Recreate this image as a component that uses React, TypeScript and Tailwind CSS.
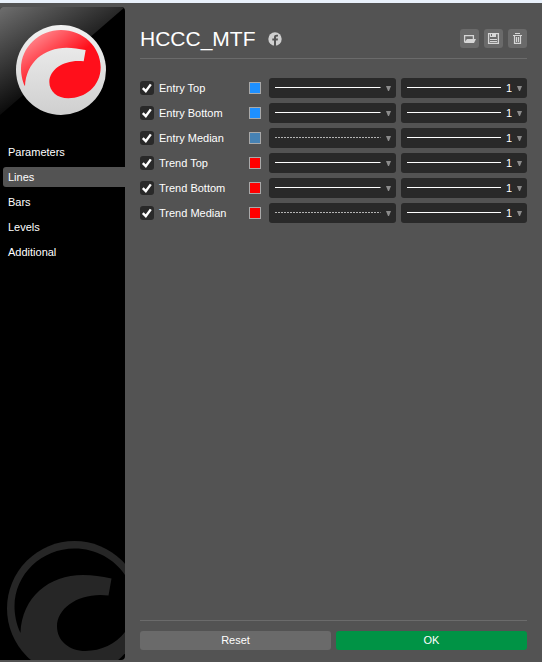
import { useState } from "react";
import clsx from "clsx";

const TABS = ["Parameters", "Lines", "Bars", "Levels", "Additional"];

type LineStyle = "solid" | "dots";

interface Line {
  name: string;
  color: string;
  style: LineStyle;
}

const INITIAL_LINES: Line[] = [
  { name: "Entry Top", color: "#1e90ff", style: "solid" },
  { name: "Entry Bottom", color: "#1e90ff", style: "solid" },
  { name: "Entry Median", color: "#4682b4", style: "dots" },
  { name: "Trend Top", color: "#ff0000", style: "solid" },
  { name: "Trend Bottom", color: "#ff0000", style: "solid" },
  { name: "Trend Median", color: "#ff0000", style: "dots" },
];

// The part of the disc that is not covered by the swoosh
const SWOOSH =
  "M27 184C18 166 15 145 15 131C15 66 70 15 135 15C201 15 254 66 254 127C254 184 207 220 157 220C124 220 100 199 100 171C100 132 147 102 203 109L209 75C188 71 172 68 152 68C84 68 30 112 27 184Z";

const Logo = () => (
  <svg viewBox="0 0 270 270" className="size-[90px]" aria-hidden="true">
    <defs>
      <linearGradient id="disc" x1="0" y1="0" x2="0" y2="1">
        <stop offset="0" stopColor="#f2f2f2" />
        <stop offset="1" stopColor="#cfcfcf" />
      </linearGradient>
      <linearGradient
        id="red"
        gradientUnits="userSpaceOnUse"
        x1="60"
        y1="30"
        x2="130"
        y2="128"
      >
        <stop offset="0" stopColor="#ff858b" />
        <stop offset="1" stopColor="#ff0f1b" />
      </linearGradient>
    </defs>
    <circle cx="135" cy="135" r="135" fill="url(#disc)" />
    <path d={SWOOSH} fill="url(#red)" />
  </svg>
);

const Watermark = () => (
  <svg
    viewBox="0 0 270 270"
    className="ml-[7px] size-[135px] max-w-none"
    aria-hidden="true"
  >
    <circle cx="135" cy="135" r="135" fill="#262626" />
    <path d={SWOOSH} fill="#000" />
  </svg>
);

const Gloss = () => (
  <svg
    viewBox="0 0 125 108"
    className="absolute inset-x-0 top-0 w-full"
    aria-hidden="true"
  >
    <defs>
      <linearGradient
        id="gloss"
        gradientUnits="userSpaceOnUse"
        x1="0"
        y1="0"
        x2="53"
        y2="88"
      >
        <stop offset="0" stopColor="#6e6e6e" />
        <stop offset="1" stopColor="#000" />
      </linearGradient>
    </defs>
    <path d="M0 0H125L0 108Z" fill="url(#gloss)" />
  </svg>
);

const FacebookIcon = () => (
  <svg viewBox="0 0 14 14" className="size-[14px]" aria-hidden="true">
    <circle cx="7" cy="7" r="6.7" fill="#cfcfcf" />
    <path
      d="M6 14V8.4H4.3V6.4H6V5.2C6 3.5 7 2.7 8.6 2.7H10V4.6H9C8.3 4.6 8 4.9 8 5.5V6.4H10L9.7 8.4H8V14Z"
      fill="#535353"
    />
  </svg>
);

const OpenIcon = () => (
  <svg viewBox="0 0 19 19" className="size-[19px]" aria-hidden="true">
    <path
      d="M4.6 13V6.6H13.4V10"
      fill="none"
      stroke="#d6d6d6"
      strokeWidth="1.3"
    />
    <path d="M4 14L7 10H16L14 14Z" fill="#d6d6d6" />
  </svg>
);

const SaveIcon = () => (
  <svg viewBox="0 0 19 19" className="size-[19px]" aria-hidden="true">
    <path
      d="M4.6 4.6H14.4V14.4H4.6Z"
      fill="none"
      stroke="#d6d6d6"
      strokeWidth="1.3"
    />
    <path d="M6 4H12V8H6ZM6 10H13V11H6ZM6 12H13V13H6Z" fill="#d6d6d6" />
    <path d="M7 5H8V7H7Z" fill="#6a6a6a" />
  </svg>
);

const TrashIcon = () => (
  <svg viewBox="0 0 19 19" className="size-[19px]" aria-hidden="true">
    <path d="M7 4H12V5H7ZM5 6H14V7H5Z" fill="#d6d6d6" />
    <path
      d="M6.5 7V14.4H12.5V7M8.5 8V13M10.5 8V13"
      fill="none"
      stroke="#d6d6d6"
      strokeWidth="1.2"
    />
  </svg>
);

const TOOLS = [
  { label: "Open", Icon: OpenIcon },
  { label: "Save", Icon: SaveIcon },
  { label: "Delete", Icon: TrashIcon },
];

const Arrow = () => (
  <svg
    viewBox="0 0 5 5"
    className="mt-[2px] size-[5px] shrink-0"
    aria-hidden="true"
  >
    <path d="M0 0H5L3 5H2Z" fill="#8c8c8c" />
  </svg>
);

const selectClass =
  "block h-5 w-full appearance-none rounded-[3px] bg-[#292929] text-[11px] text-white outline-none";

const overlayClass =
  "pointer-events-none absolute inset-x-0 top-0 bottom-px flex items-center pr-[5px] pl-[6px]";

const LineRow = ({ line }: { line: Line }) => {
  const [enabled, setEnabled] = useState(true);
  const [color, setColor] = useState(line.color);
  const [style, setStyle] = useState<LineStyle>(line.style);
  const [width, setWidth] = useState("1");

  return (
    <li className="flex items-center gap-[5px]">
      <div className="flex w-[124px] shrink-0 items-center">
        <label className="flex flex-1 items-center gap-[5px]">
          <span className="relative size-[14px]">
            <input
              type="checkbox"
              checked={enabled}
              onChange={(e) => setEnabled(e.target.checked)}
              className="block size-[14px] appearance-none rounded-[3px] bg-[#292929]"
            />
            {enabled && (
              <svg
                viewBox="0 0 14 14"
                className="pointer-events-none absolute inset-0"
                aria-hidden="true"
              >
                <path
                  d="M2.8 7.2L5.8 10.2L10.8 3.4"
                  fill="none"
                  stroke="#fff"
                  strokeWidth="2.4"
                />
              </svg>
            )}
          </span>
          {line.name}
        </label>
        <input
          type="color"
          aria-label={`${line.name} color`}
          value={color}
          onChange={(e) => setColor(e.target.value)}
          className="mr-[3px] size-3 appearance-none border border-[#a9a9a9] p-0 [&::-webkit-color-swatch]:rounded-none [&::-webkit-color-swatch]:border-0 [&::-webkit-color-swatch-wrapper]:p-0"
        />
      </div>

      <div className="relative flex-1">
        <select
          aria-label={`${line.name} style`}
          value={style}
          onChange={(e) => setStyle(e.target.value as LineStyle)}
          className={selectClass}
        >
          <option value="solid" aria-label="Solid" />
          <option value="dots" aria-label="Dots" />
        </select>
        <span className={overlayClass}>
          <svg className="mr-[5px] h-px flex-1" aria-hidden="true">
            <line
              x1="0"
              x2="100%"
              y1="0.5"
              y2="0.5"
              stroke={style === "solid" ? "#fff" : "#b4b4b4"}
              strokeDasharray={style === "solid" ? undefined : "2 1"}
            />
          </svg>
          <Arrow />
        </span>
      </div>

      <div className="relative flex-1">
        <select
          aria-label={`${line.name} width`}
          value={width}
          onChange={(e) => setWidth(e.target.value)}
          className={clsx(selectClass, "pr-[15px] [text-align-last:right]")}
        >
          {["1", "2", "3", "4", "5"].map((w) => (
            <option key={w}>{w}</option>
          ))}
        </select>
        <span className={overlayClass}>
          <span className="mr-4 h-px flex-1 bg-white" />
          <Arrow />
        </span>
      </div>
    </li>
  );
};

const App = () => {
  const [tab, setTab] = useState("Lines");

  return (
    <div className="flex min-h-screen flex-col border-t-[3px] border-[#e9f1fb] bg-[#535353] font-['Liberation_Sans',Arial,sans-serif] text-[11px] leading-5 text-white">
      <div className="flex flex-1">
        <aside className="relative mt-1 mb-[2px] flex w-[125px] shrink-0 flex-col overflow-hidden rounded-r-[4px] rounded-tl-[3px] bg-black">
          <Gloss />
          <div className="relative flex justify-center pt-[18px] pr-[3px]">
            <Logo />
          </div>
          <nav className="mt-[27px] flex flex-col gap-[5px] pl-[3px]">
            {TABS.map((name) => (
              <button
                key={name}
                type="button"
                onClick={() => setTab(name)}
                className={clsx(
                  "h-5 rounded-l-[3px] pl-[5px] text-left",
                  tab === name && "bg-[#535353]",
                )}
              >
                {name}
              </button>
            ))}
          </nav>
          <div className="mt-auto -mb-4">
            <Watermark />
          </div>
        </aside>

        <main className="flex min-w-0 flex-1 flex-col px-[15px] pt-5 pb-3">
          <header className="flex items-center border-b border-[#6b6b6b] pb-1">
            <h1 className="text-[21px] leading-[31px]">HCCC_MTF</h1>
            <a href="#facebook" aria-label="Facebook" className="ml-3">
              <FacebookIcon />
            </a>
            <div className="ml-auto flex gap-[5px]">
              {TOOLS.map(({ label, Icon }) => (
                <button
                  key={label}
                  type="button"
                  aria-label={label}
                  className="rounded-[3px] bg-[#6a6a6a]"
                >
                  <Icon />
                </button>
              ))}
            </div>
          </header>

          <ul className="mt-[19px] flex flex-col gap-[5px]">
            {INITIAL_LINES.map((line) => (
              <LineRow key={line.name} line={line} />
            ))}
          </ul>

          <footer className="mt-auto flex gap-[5px] border-t border-[#6b6b6b] pt-[10px]">
            <button
              type="button"
              className="h-[19px] flex-1 rounded-[3px] bg-[#6a6a6a] leading-[19px]"
            >
              Reset
            </button>
            <button
              type="button"
              className="h-[19px] flex-1 rounded-[3px] bg-[#009345] leading-[19px]"
            >
              OK
            </button>
          </footer>
        </main>
      </div>
    </div>
  );
};

export default App;
